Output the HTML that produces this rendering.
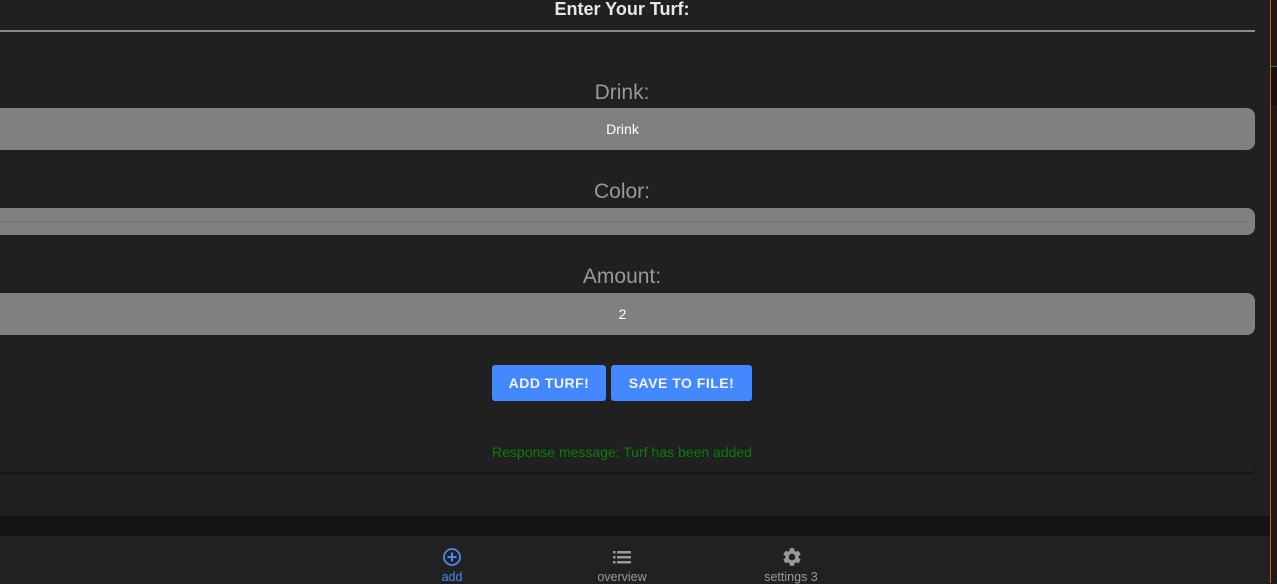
<!DOCTYPE html>
<html><head><meta charset="utf-8"><style>
*{margin:0;padding:0;box-sizing:border-box}
body{width:1277px;height:583px;background:#202020;font-family:"Liberation Sans",Arial,sans-serif;position:relative;overflow:hidden}
.a{position:absolute}
.h{left:0;width:1244px;top:0;text-align:center;color:#e6e6e6;font-weight:bold;font-size:18px;line-height:18px}
.rule{left:0;width:1255px;top:30px;height:2px;background:#8a8a8a}
.lbl{left:0;width:1244px;text-align:center;color:#999;font-size:21px}
.inp{left:-10px;width:1265px;background:#808080;border-radius:8px;color:#fff;font-size:14px;text-align:center}
.btn{background:#4488ff;color:#f4f4f4;border-radius:3px;font-size:14px;font-weight:bold;text-align:center;line-height:36px;letter-spacing:.5px}
.nav{color:#999;font-size:12.5px;text-align:center;width:120px}
</style></head><body>
<div class="a h">Enter Your Turf:</div>
<div class="a rule"></div>
<div class="a lbl" style="top:81px">Drink:</div>
<div class="a inp" style="top:108px;height:42px;line-height:42px">Drink</div>
<div class="a lbl" style="top:180px">Color:</div>
<div class="a inp" style="top:208px;height:27px"><div style="position:absolute;left:0;right:8px;top:13px;height:1px;background:#707070"></div></div>
<div class="a lbl" style="top:265px">Amount:</div>
<div class="a inp" style="top:293px;height:42px;line-height:42px">2</div>
<div class="a btn" style="left:492px;top:365px;width:114px;height:36px">ADD TURF!</div>
<div class="a btn" style="left:611px;top:365px;width:141px;height:36px">SAVE TO FILE!</div>
<div class="a" style="left:0;width:1255px;top:430px;height:42px;background:#202020;box-shadow:0 2px 2px rgba(0,0,0,.35);border-radius:0 0 4px 0"></div>
<div class="a" style="left:0;width:1244px;top:444px;text-align:center;color:#0a7d0a;font-size:14px">Response message: Turf has been added</div>
<div class="a" style="left:0;width:1270px;top:516px;height:20px;background:#141414"></div>
<div class="a" style="left:0;width:1270px;top:536px;height:47px;background:#212121"></div>
<svg class="a" style="left:442px;top:547px" width="20" height="20" viewBox="0 0 20 20"><circle cx="10" cy="10" r="8" fill="none" stroke="#4a8cf0" stroke-width="1.8"/><path d="M10 5.5v9M5.5 10h9" stroke="#4a8cf0" stroke-width="2"/></svg>
<div class="a nav" style="left:392px;top:570px;color:#4a8cf0">add</div>
<svg class="a" style="left:612px;top:549px" width="20" height="16" viewBox="0 0 20 16"><g fill="#999"><rect x="1" y="2" width="2.5" height="2.5"/><rect x="1" y="7" width="2.5" height="2.5"/><rect x="1" y="12" width="2.5" height="2.5"/><rect x="5" y="2" width="14" height="2.5"/><rect x="5" y="7" width="14" height="2.5"/><rect x="5" y="12" width="14" height="2.5"/></g></svg>
<div class="a nav" style="left:562px;top:570px">overview</div>
<svg class="a" style="left:781px;top:546px" width="22" height="22" viewBox="0 0 24 24"><path fill="#999" d="M19.14 12.94c.04-.3.06-.61.06-.94 0-.32-.02-.64-.07-.94l2.030-1.58a.49.49 0 00.12-.61l-1.92-3.32a.49.49 0 00-.59-.22l-2.390.96c-.5-.38-1.030-.7-1.62-.94l-.36-2.54a.48.48 0 00-.48-.41h-3.84c-.24 0-.43.17-.47.41l-.36 2.54c-.59.24-1.13.57-1.62.94l-2.39-.96a.49.49 0 00-.59.22L2.74 8.87c-.12.21-.08.47.12.61l2.030 1.58c-.05.3-.09.63-.09.94s.02.64.07.94l-2.030 1.58a.49.49 0 00-.12.61l1.92 3.32c.12.22.37.29.59.22l2.39-.96c.5.38 1.030.7 1.62.94l.36 2.54c.05.24.24.41.48.41h3.84c.24 0 .44-.17.47-.41l.36-2.54c.59-.24 1.13-.56 1.62-.94l2.390.96c.22.08.47 0 .59-.22l1.92-3.32c.12-.22.07-.47-.12-.61l-2.010-1.58zM12 15.6A3.6 3.6 0 1112 8.4a3.6 3.6 0 010 7.2z"/><circle cx="12" cy="12" r="2.2" fill="#212121"/></svg>
<div class="a nav" style="left:731px;top:570px">settings 3</div>
<div class="a" style="left:1270px;top:0;width:1px;height:583px;background:#e8541e"></div>
<div class="a" style="left:1271px;top:0;width:6px;height:583px;background:#1a1a1a"></div>
<div class="a" style="left:1271px;top:66px;width:6px;height:1px;background:#2a6a6a"></div>
<div class="a" style="left:1271px;top:67px;width:6px;height:38px;background:#111"></div>
</body></html>
